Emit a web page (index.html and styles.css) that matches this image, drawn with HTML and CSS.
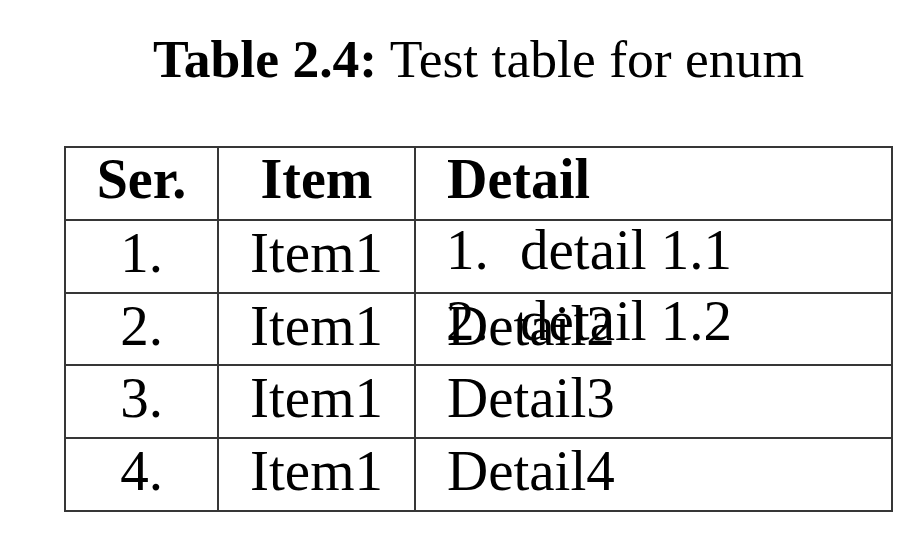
FILE: index.html
```html
<!DOCTYPE html>
<html>
<head>
<meta charset="utf-8">
<link rel="stylesheet" href="styles.css">
</head>
<body>
<div class="page">
  <div class="figure">
    <div class="caption"><b>Table 2.4:</b> Test table for enum</div>
    <table class="tbl">
      <colgroup>
        <col class="c1"><col class="c2"><col class="c3">
      </colgroup>
      <tr>
        <th class="ctr">Ser.</th>
        <th class="ctr">Item</th>
        <th class="lft">Detail</th>
      </tr>
      <tr>
        <td class="ctr">1.</td>
        <td class="ctr">Item1</td>
        <td class="lft">
          <div class="holder">
            <ol class="enum">
              <li><span class="lbl">1.</span><span>detail 1.1</span></li>
              <li><span class="lbl">2.</span><span>detail 1.2</span></li>
            </ol>
          </div>
        </td>
      </tr>
      <tr>
        <td class="ctr">2.</td>
        <td class="ctr">Item1</td>
        <td class="lft">Detail2</td>
      </tr>
      <tr>
        <td class="ctr">3.</td>
        <td class="ctr">Item1</td>
        <td class="lft">Detail3</td>
      </tr>
      <tr>
        <td class="ctr">4.</td>
        <td class="ctr">Item1</td>
        <td class="lft">Detail4</td>
      </tr>
    </table>
  </div>
</div>
</body>
</html>
```

FILE: styles.css
```css
html, body {
  margin: 0;
  padding: 0;
  background: #ffffff;
}
body {
  font-family: "Liberation Serif", "Times New Roman", serif;
  color: #000000;
}
.page {
  padding: 29px 0 0 64px;
}
.figure {
  width: 829px;
  display: flex;
  flex-direction: column;
  align-items: center;
}
.caption {
  font-size: 53.6px;
  line-height: 60px;
  white-space: nowrap;
  margin-bottom: 57px;
}
.caption b {
  font-weight: bold;
}
.tbl {
  border-collapse: collapse;
  table-layout: fixed;
  width: 829px;
  font-size: 57px;
}
.c1 { width: 153px; }
.c2 { width: 197px; }
.c3 { width: 477px; }
.tbl th, .tbl td {
  border: 2px solid #363636;
  height: 70.8px;
  padding: 0;
  line-height: 63px;
  vertical-align: top;
  white-space: nowrap;
}
.tbl th {
  font-weight: bold;
  font-size: 56px;
}
.ctr {
  text-align: center;
}
.lft {
  text-align: left;
  padding-left: 31px !important;
}
.holder {
  height: 63px;
  overflow: visible;
}
.enum {
  list-style: none;
  margin: -7px 0 0 -1px;
  padding: 0;
  line-height: 71px;
}
.enum li {
  display: flex;
}
.lbl {
  width: 74px;
  flex: none;
}
```
